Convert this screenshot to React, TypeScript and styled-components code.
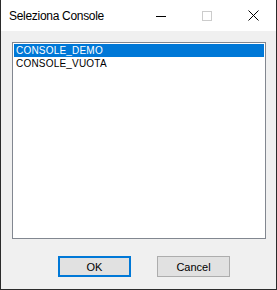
import React, { useState } from 'react';
import styled, { createGlobalStyle } from 'styled-components';

const GlobalStyle = createGlobalStyle`
  html, body {
    margin: 0;
    padding: 0;
    background: #ffffff;
  }
`;

const Window = styled.div`
  width: 277px;
  height: 290px;
  box-sizing: border-box;
  border: 1px solid #2b2b2b;
  border-top: none;
  background: #f0f0f0;
  display: flex;
  flex-direction: column;
`;

const TitleBar = styled.div`
  height: 31px;
  flex-shrink: 0;
  background: #ffffff;
  display: flex;
  align-items: center;
  padding-left: 8px;
`;

const Title = styled.div`
  flex: 1;
  font-family: 'Liberation Sans', Arial, sans-serif;
  font-size: 12px;
  letter-spacing: -0.3px;
  color: #000000;
`;

const CaptionButton = styled.div`
  width: 46px;
  height: 31px;
  display: flex;
  align-items: center;
  justify-content: center;
`;

const Body = styled.div`
  flex: 1;
  display: flex;
  flex-direction: column;
  padding: 11px 10px 0 11px;
`;

const ListBox = styled.div`
  width: 254px;
  height: 197px;
  box-sizing: border-box;
  border: 1px solid #828790;
  background: #ffffff;
  padding: 1px;
`;

const Item = styled.div<{ selected: boolean }>`
  height: 13px;
  line-height: 13px;
  padding-left: 2px;
  font-family: 'Liberation Sans', Arial, sans-serif;
  font-size: 10px;
  letter-spacing: 0.2px;
  color: ${(p) => (p.selected ? '#ffffff' : '#000000')};
  background: ${(p) => (p.selected ? '#0078d7' : 'transparent')};
  cursor: default;
`;

const ButtonRow = styled.div`
  display: flex;
  gap: 26px;
  padding-left: 46px;
  margin-top: 17px;
`;

const Button = styled.button<{ primary?: boolean }>`
  width: 73px;
  height: 21px;
  box-sizing: border-box;
  margin: 0;
  padding: 0;
  background: #e1e1e1;
  border: ${(p) => (p.primary ? '2px solid #0078d7' : '1px solid #adadad')};
  font-family: 'Liberation Sans', Arial, sans-serif;
  font-size: 11px;
  color: #000000;
`;

const consoles = ['CONSOLE_DEMO', 'CONSOLE_VUOTA'];

export default function App() {
  const [selected, setSelected] = useState(0);

  return (
    <>
      <GlobalStyle />
      <Window>
        <TitleBar>
          <Title>Seleziona Console</Title>
          <CaptionButton>
            <svg width="10" height="10" viewBox="0 0 10 10">
              <line x1="0" y1="5.5" x2="10" y2="5.5" stroke="#000" strokeWidth="1" />
            </svg>
          </CaptionButton>
          <CaptionButton>
            <svg width="10" height="10" viewBox="0 0 10 10">
              <rect x="0.5" y="0.5" width="9" height="9" fill="none" stroke="#cccccc" strokeWidth="1" />
            </svg>
          </CaptionButton>
          <CaptionButton>
            <svg width="11" height="11" viewBox="0 0 11 11">
              <path d="M0.5 0.5 L10.5 10.5 M10.5 0.5 L0.5 10.5" stroke="#000" strokeWidth="1" />
            </svg>
          </CaptionButton>
        </TitleBar>
        <Body>
          <ListBox>
            {consoles.map((c, i) => (
              <Item key={c} selected={i === selected} onClick={() => setSelected(i)}>
                {c}
              </Item>
            ))}
          </ListBox>
          <ButtonRow>
            <Button primary>OK</Button>
            <Button>Cancel</Button>
          </ButtonRow>
        </Body>
      </Window>
    </>
  );
}
